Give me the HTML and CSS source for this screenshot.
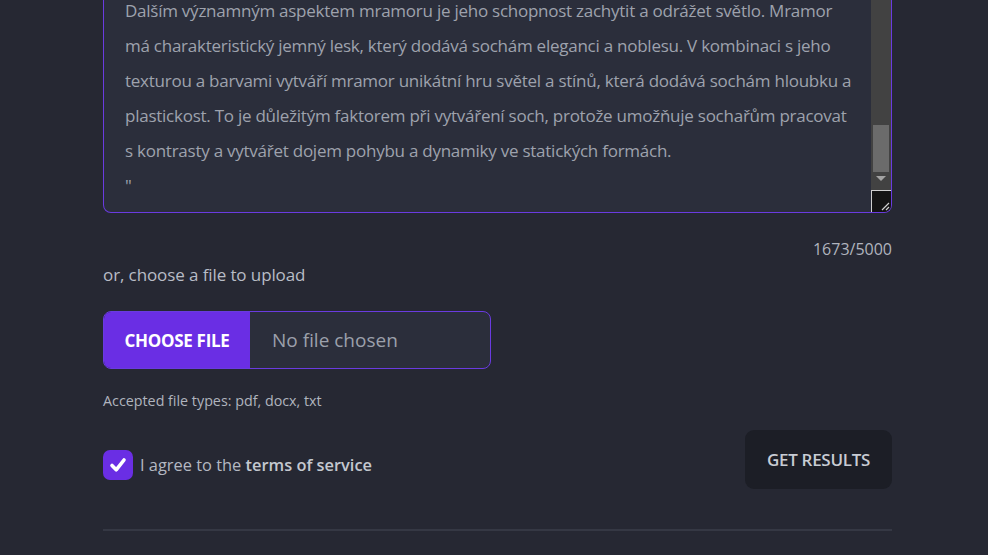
FILE: index.html
```html
<!DOCTYPE html>
<html lang="cs">
<head>
<meta charset="utf-8">
<title>Upload</title>
<link rel="stylesheet" href="styles.css">
</head>
<body>
<main class="form">
  <div class="textarea-box">
    <div class="textarea-text">Dalším významným aspektem mramoru je jeho schopnost zachytit a odrážet světlo. Mramor
má charakteristický jemný lesk, který dodává sochám eleganci a noblesu. V kombinaci s jeho
texturou a barvami vytváří mramor unikátní hru světel a stínů, která dodává sochám hloubku a
plastickost. To je důležitým faktorem při vytváření soch, protože umožňuje sochařům pracovat
s kontrasty a vytvářet dojem pohybu a dynamiky ve statických formách.
"</div>
    <div class="scrollbar">
      <div class="scroll-track"><div class="scroll-thumb"></div></div>
      <div class="scroll-arrow"></div>
      <div class="resizer">
        <svg width="10" height="10" viewBox="0 0 10 10"><path d="M9 2 L2 9 M9 6 L6 9" stroke="#d0d0d0" stroke-width="1.2" fill="none"/></svg>
      </div>
    </div>
  </div>
  <div class="counter">1673/5000</div>
  <p class="upload-label">or, choose a file to upload</p>
  <div class="file-input">
    <span class="file-btn">CHOOSE FILE</span>
    <span class="file-name">No file chosen</span>
  </div>
  <p class="hint">Accepted file types: pdf, docx, txt</p>
  <div class="actions">
    <label class="agree">
      <span class="checkbox">
        <svg width="22" height="22" viewBox="0 0 22 22"><path d="M5 11.5 L9.2 15.8 L17 6" stroke="#fff" stroke-width="3.6" fill="none" stroke-linecap="round" stroke-linejoin="round"/></svg>
      </span>
      <span class="agree-text">I agree to the <b>terms of service</b></span>
    </label>
    <button class="submit" type="button">GET RESULTS</button>
  </div>
  <hr class="divider">
</main>
</body>
</html>
```
FILE: styles.css
```css
html, body {
  margin: 0;
  padding: 0;
  background: #262833;
  height: 100%;
  overflow: hidden;
}
body {
  font-family: "Open Sans", "Noto Sans", "Liberation Sans", sans-serif;
  color: #b4b8c2;
}
.form {
  width: 789px;
  margin-left: 103px;
  display: flex;
  flex-direction: column;
}
.textarea-box {
  height: 212px;
  background: #2b2e3b;
  border: 1px solid #6a3be0;
  border-top: none;
  border-radius: 0 0 8px 8px;
  display: flex;
  justify-content: space-between;
  box-sizing: content-box;
  overflow: hidden;
}
.textarea-text {
  white-space: pre-line;
  font-size: 17px;
  line-height: 35px;
  letter-spacing: -0.25px;
  color: #9ea2ad;
  padding-left: 21px;
  margin-top: -7px;
}
.scrollbar {
  width: 20px;
  display: flex;
  flex-direction: column;
  background: #424242;
}
.scroll-track {
  flex: 1;
  display: flex;
  flex-direction: column;
  justify-content: flex-end;
  padding: 0 2px 4px 2px;
}
.scroll-thumb {
  height: 47px;
  background: #6b6b6b;
}
.scroll-arrow {
  height: 14px;
  display: flex;
  justify-content: center;
  align-items: flex-start;
}
.scroll-arrow::before {
  content: "";
  border-left: 5px solid transparent;
  border-right: 5px solid transparent;
  border-top: 5px solid #a3a3a3;
}
.resizer {
  height: 20px;
  background: #141414;
  border-top: 1px solid #cfcfcf;
  border-left: 1px solid #cfcfcf;
  display: flex;
  justify-content: flex-end;
  align-items: flex-end;
  padding: 0 1px 1px 0;
}
.resizer svg { display: block; }
.counter {
  text-align: right;
  font-size: 16px;
  margin-top: 25px;
  line-height: 22px;
  color: #b0b4be;
}
.upload-label {
  margin: 3px 0 0;
  font-size: 17px;
  letter-spacing: -0.1px;
  line-height: 24px;
  color: #b8bcc6;
}
.file-input {
  margin-top: 24px;
  width: 386px;
  height: 56px;
  border: 1px solid #6a3be0;
  border-radius: 8px;
  display: flex;
  align-items: center;
  overflow: hidden;
  background: #2b2e3b;
}
.file-btn {
  background: #6a2ee4;
  color: #fff;
  font-weight: 700;
  font-size: 17px;
  letter-spacing: -0.3px;
  height: 100%;
  width: 146px;
  display: flex;
  align-items: center;
  justify-content: center;
}
.file-name {
  margin-left: 22px;
  font-size: 19px;
  color: #9ca0ab;
}
.hint {
  margin: 22px 0 0;
  font-size: 14.3px;
  line-height: 20px;
  color: #b0b4be;
}
.actions {
  margin-top: 19px;
  display: flex;
  justify-content: space-between;
  align-items: center;
}
.agree {
  display: flex;
  align-items: center;
  gap: 7px;
  margin-top: 10px;
  font-size: 16.4px;
  color: #b4b8c2;
}
.agree b { font-weight: 600; color: #c4c8d0; }
.checkbox {
  width: 30px;
  height: 30px;
  border-radius: 7px;
  background: #6a2ee4;
  display: flex;
  align-items: center;
  justify-content: center;
}
.checkbox svg { display: block; }
.submit {
  width: 147px;
  height: 59px;
  border: none;
  border-radius: 9px;
  background: #1c1e26;
  color: #c8ccd4;
  font-family: inherit;
  font-size: 17px;
  font-weight: 600;
  letter-spacing: -0.3px;
}
.divider {
  margin: 40px 0 0;
  border: none;
  height: 2px;
  background: #353844;
}
```
